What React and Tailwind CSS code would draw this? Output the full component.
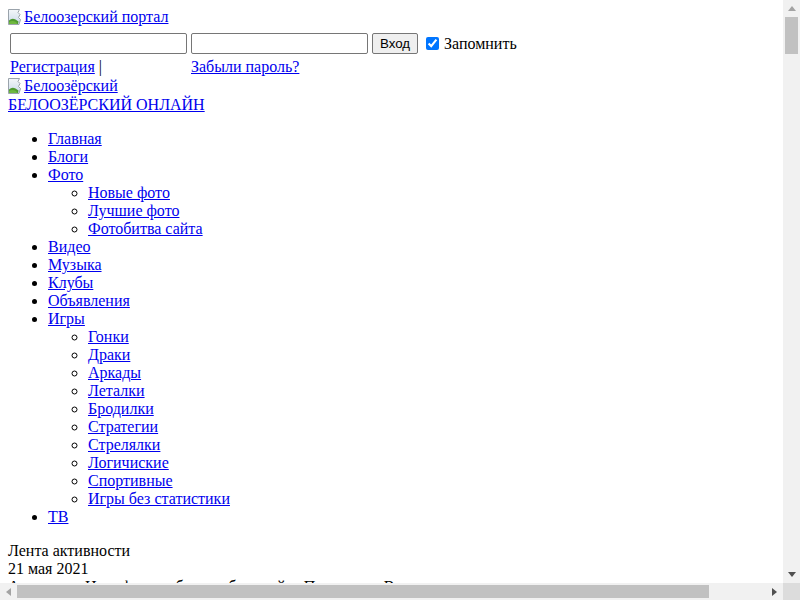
import { useState } from "react";

const photoLinks = ["Новые фото", "Лучшие фото", "Фотобитва сайта"];
const gameLinks = [
  "Гонки",
  "Драки",
  "Аркады",
  "Леталки",
  "Бродилки",
  "Стратегии",
  "Стрелялки",
  "Логичиские",
  "Спортивные",
  "Игры без статистики",
];

// broken image placeholder, like the browser draws for a missing picture
function BrokenImg({ id }) {
  return (
    <svg width="16" height="16" viewBox="0 0 16 16" className="shrink-0 mt-[1px]">
      <defs>
        <linearGradient id={id} x1="0" y1="0" x2="0" y2="1">
          <stop offset="0" stopColor="#f4f7fa" />
          <stop offset="1" stopColor="#c9d9e8" />
        </linearGradient>
      </defs>
      <path d="M0.5 0.5h11l-1.5 3 2 2-1.5 3 2 2-1.5 5H0.5z" fill={`url(#${id})`} stroke="#9aa3ab" />
      <path d="M1 15V11.5Q4 8.5 7.5 10.5L10.5 12.5 10 15z" fill="#4f9a2f" />
      <path d="M1 15V13Q4 11 8 13L9.5 15z" fill="#6fb83f" />
    </svg>
  );
}

function Link({ children, className = "" }) {
  return (
    <a href="#" className={`text-[#0000ee] underline ${className}`}>
      {children}
    </a>
  );
}

function Arrow({ dir, color }) {
  const pts = {
    up: "4,1 8,6 0,6",
    down: "0,1 8,1 4,6",
    left: "6,0 6,8 1,4",
    right: "1,0 1,8 6,4",
  }[dir];
  const vertical = dir === "up" || dir === "down";
  return (
    <svg width={vertical ? 8 : 7} height={vertical ? 7 : 8} viewBox={vertical ? "0 0 8 7" : "0 0 7 8"}>
      <polygon points={pts} fill={color} />
    </svg>
  );
}

// browser scrollbars shown in the screenshot
function Scrollbars() {
  return (
    <>
      <div className="fixed top-0 right-0 w-[17px] h-[583px] bg-[#f1f1f1] flex flex-col">
        <div className="h-[17px] flex items-center justify-center"><Arrow dir="up" color="#a3a3a3" /></div>
        <div className="flex-1 px-[2px]">
          <div className="h-[37px] bg-[#c1c1c1]"></div>
        </div>
        <div className="h-[17px] flex items-center justify-center"><Arrow dir="down" color="#505050" /></div>
      </div>
      <div className="fixed bottom-0 left-0 w-[783px] h-[17px] bg-[#f1f1f1] flex">
        <div className="w-[17px] flex items-center justify-center"><Arrow dir="left" color="#a3a3a3" /></div>
        <div className="flex-1 py-[2px]">
          <div className="w-[692px] h-full bg-[#c1c1c1]"></div>
        </div>
        <div className="w-[17px] flex items-center justify-center"><Arrow dir="right" color="#505050" /></div>
      </div>
      <div className="fixed bottom-0 right-0 w-[17px] h-[17px] bg-[#dcdcdc]"></div>
    </>
  );
}

export default function App() {
  const [remember, setRemember] = useState(true);

  return (
    <div className="w-[847px] min-h-[10700px] p-2 bg-white text-black text-base leading-[18px] font-['Liberation_Serif',serif]">
      {/* logo */}
      <div className="h-[18px]">
        <a href="#" className="inline-flex items-start text-[#0000ee]">
          <BrokenImg id="sky1" />
          <span className="underline">Белоозерский портал</span>
        </a>
      </div>

      {/* login */}
      <div className="mt-[7px] ml-[2px] grid grid-cols-[177px_177px_auto_auto] gap-x-1 gap-y-1 w-max">
        <input type="text" className="h-[21px] w-[177px] border border-[#767676] rounded-[2px] px-[2px] outline-none" />
        <input type="password" className="h-[21px] w-[177px] border border-[#767676] rounded-[2px] px-[2px] outline-none" />
        <button className="h-[21px] w-[46px] border border-[#767676] rounded-[2px] bg-[#efefef] text-[13.33px] leading-[15px] font-['Liberation_Sans',sans-serif]">
          Вход
        </button>
        <label className="flex items-center">
          <input
            type="checkbox"
            checked={remember}
            onChange={() => setRemember(prev => !prev)}
            className="w-[13px] h-[13px] mt-[3px] mb-[3px] ml-1 mr-[3px] accent-[#0075ff]"
          />
          <span className="ml-[2px]">Запомнить</span>
        </label>
        <div className="h-[18px]">
          <Link>Регистрация</Link> |
        </div>
        <div className="h-[18px]">
          <Link>Забыли пароль?</Link>
        </div>
      </div>

      {/* site title */}
      <div className="mt-[1px] h-[19px]">
        <a href="#" className="inline-flex items-start text-[#0000ee]">
          <BrokenImg id="sky2" />
          <span className="underline">Белоозёрский</span>
        </a>
      </div>
      <div>
        <Link>БЕЛООЗЁРСКИЙ ОНЛАЙН</Link>
      </div>

      {/* menu */}
      <ul className="list-disc pl-10 my-4">
        <li><Link>Главная</Link></li>
        <li><Link>Блоги</Link></li>
        <li>
          <Link>Фото</Link>
          <ul className="list-[circle] pl-10">
            {photoLinks.map(item => (
              <li key={item}><Link>{item}</Link></li>
            ))}
          </ul>
        </li>
        <li><Link>Видео</Link></li>
        <li><Link>Музыка</Link></li>
        <li><Link>Клубы</Link></li>
        <li><Link>Объявления</Link></li>
        <li>
          <Link>Игры</Link>
          <ul className="list-[circle] pl-10">
            {gameLinks.map(item => (
              <li key={item}><Link>{item}</Link></li>
            ))}
          </ul>
        </li>
        <li><Link>ТВ</Link></li>
      </ul>

      {/* activity feed */}
      <div>Лента активности</div>
      <div>21 мая 2021</div>
      <div className="whitespace-nowrap">
        Александр Никифоров обновил блог сайта Погода для Вологды
      </div>

      <Scrollbars />
    </div>
  );
}
